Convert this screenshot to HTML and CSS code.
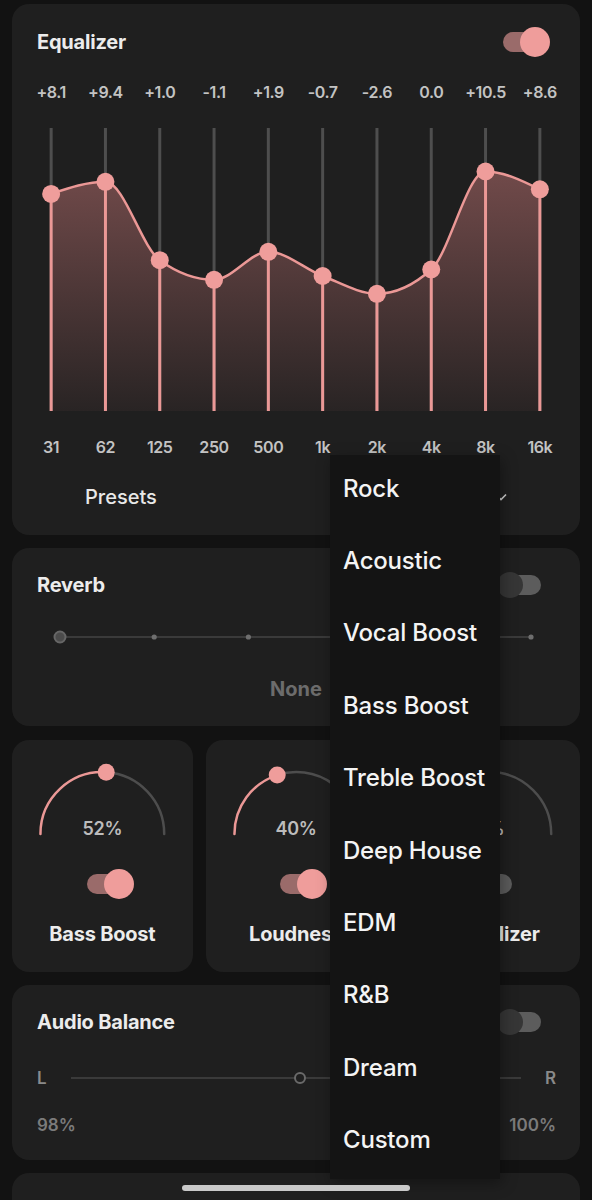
FILE: index.html
```html
<!DOCTYPE html>
<html lang="en">
<head>
<meta charset="utf-8">
<title>Sound Effects</title>
<link rel="stylesheet" href="styles.css">
</head>
<body>
<main class="screen">
  <section class="card eq">
    <header class="card-head">
      <h2 class="title">Equalizer</h2>
      <span class="toggle on"><span class="track"></span><span class="knob"></span></span>
    </header>
    <div class="bands values">
      <span>+8.1</span><span>+9.4</span><span>+1.0</span><span>-1.1</span><span>+1.9</span>
      <span>-0.7</span><span>-2.6</span><span>0.0</span><span>+10.5</span><span>+8.6</span>
    </div>
    <svg class="curve" width="543" height="312" viewBox="0 0 543 312">
      <defs>
        <linearGradient id="eqFill" gradientUnits="userSpaceOnUse" x1="0" y1="59" x2="0" y2="299">
          <stop offset="0" stop-color="#714a4a"/>
          <stop offset="1" stop-color="#292424"/>
        </linearGradient>
      </defs>
      <path fill="url(#eqFill)" d="M27.15,81.9 C45.25,75.85 63.35,69.8 81.45,69.8 C99.55,69.8 117.65,135.13 135.75,148.2 C153.85,161.27 171.95,167.8 190.05,167.8 C208.15,167.8 226.25,139.8 244.35,139.8 C262.45,139.8 280.55,157 298.65,164 C316.75,171 334.85,181.8 352.95,181.8 C371.05,181.8 389.15,173.7 407.25,157.5 C425.35,141.3 443.45,59.5 461.55,59.5 C479.65,59.5 497.75,68.4 515.85,77.3 L515.85,299 L27.15,299 Z"/>
      <g stroke="#4e4e4e" stroke-width="3">
        <line x1="27.15" y1="16" x2="27.15" y2="299"/>
        <line x1="81.45" y1="16" x2="81.45" y2="299"/>
        <line x1="135.75" y1="16" x2="135.75" y2="299"/>
        <line x1="190.05" y1="16" x2="190.05" y2="299"/>
        <line x1="244.35" y1="16" x2="244.35" y2="299"/>
        <line x1="298.65" y1="16" x2="298.65" y2="299"/>
        <line x1="352.95" y1="16" x2="352.95" y2="299"/>
        <line x1="407.25" y1="16" x2="407.25" y2="299"/>
        <line x1="461.55" y1="16" x2="461.55" y2="299"/>
        <line x1="515.85" y1="16" x2="515.85" y2="299"/>
      </g>
      <g stroke="#eb9896" stroke-width="3">
        <line x1="27.15" y1="81.9" x2="27.15" y2="299"/>
        <line x1="81.45" y1="69.8" x2="81.45" y2="299"/>
        <line x1="135.75" y1="148.2" x2="135.75" y2="299"/>
        <line x1="190.05" y1="167.8" x2="190.05" y2="299"/>
        <line x1="244.35" y1="139.8" x2="244.35" y2="299"/>
        <line x1="298.65" y1="164" x2="298.65" y2="299"/>
        <line x1="352.95" y1="181.8" x2="352.95" y2="299"/>
        <line x1="407.25" y1="157.5" x2="407.25" y2="299"/>
        <line x1="461.55" y1="59.5" x2="461.55" y2="299"/>
        <line x1="515.85" y1="77.3" x2="515.85" y2="299"/>
      </g>
      <path fill="none" stroke="#eb9896" stroke-width="2.5" d="M27.15,81.9 C45.25,75.85 63.35,69.8 81.45,69.8 C99.55,69.8 117.65,135.13 135.75,148.2 C153.85,161.27 171.95,167.8 190.05,167.8 C208.15,167.8 226.25,139.8 244.35,139.8 C262.45,139.8 280.55,157 298.65,164 C316.75,171 334.85,181.8 352.95,181.8 C371.05,181.8 389.15,173.7 407.25,157.5 C425.35,141.3 443.45,59.5 461.55,59.5 C479.65,59.5 497.75,68.4 515.85,77.3"/>
      <g fill="#ef9d9b">
        <circle cx="27.15" cy="81.9" r="9"/>
        <circle cx="81.45" cy="69.8" r="9"/>
        <circle cx="135.75" cy="148.2" r="9"/>
        <circle cx="190.05" cy="167.8" r="9"/>
        <circle cx="244.35" cy="139.8" r="9"/>
        <circle cx="298.65" cy="164" r="9"/>
        <circle cx="352.95" cy="181.8" r="9"/>
        <circle cx="407.25" cy="157.5" r="9"/>
        <circle cx="461.55" cy="59.5" r="9"/>
        <circle cx="515.85" cy="77.3" r="9"/>
      </g>
    </svg>
    <div class="bands freqs">
      <span>31</span><span>62</span><span>125</span><span>250</span><span>500</span>
      <span>1k</span><span>2k</span><span>4k</span><span>8k</span><span>16k</span>
    </div>
    <div class="presets">
      <span class="presets-label">Presets</span>
      <svg class="chevron" width="12" height="8" viewBox="0 0 12 8"><path d="M1 1.5 L6 6.5 L11 1.5" fill="none" stroke="#cfcfcf" stroke-width="1.6"/></svg>
    </div>
  </section>

  <section class="card reverb">
    <header class="card-head">
      <h2 class="title">Reverb</h2>
      <span class="toggle"><span class="track"></span><span class="knob"></span></span>
    </header>
    <svg class="steps" width="568" height="20" viewBox="0 0 568 20">
      <line x1="48" y1="10" x2="519" y2="10" stroke="#3a3a3a" stroke-width="2"/>
      <g fill="#6e6e6e">
        <circle cx="142.2" cy="10" r="2.6"/>
        <circle cx="236.4" cy="10" r="2.6"/>
        <circle cx="330.6" cy="10" r="2.6"/>
        <circle cx="424.8" cy="10" r="2.6"/>
        <circle cx="519" cy="10" r="2.6"/>
      </g>
      <circle cx="48" cy="10" r="5.5" fill="#4b4b4b" stroke="#666" stroke-width="2"/>
    </svg>
    <p class="reverb-value">None</p>
  </section>

  <div class="effects">
    <section class="card effect">
      <div class="gauge">
        <svg width="181" height="90" viewBox="0 0 181 90">
          <path d="M94.39,16.12 A62 62 0 0 1 152.5,78" fill="none" stroke="#4d4d4d" stroke-width="2.5" stroke-linecap="round"/>
          <path d="M28.5,78 A62 62 0 0 1 94.39,16.12" fill="none" stroke="#eb9896" stroke-width="2.5" stroke-linecap="round"/>
          <circle cx="94.39" cy="16.12" r="8.5" fill="#ef9d9b"/>
        </svg>
        <span class="gauge-value">52%</span>
      </div>
      <span class="toggle on"><span class="track"></span><span class="knob"></span></span>
      <h3 class="effect-name">Bass Boost</h3>
    </section>
    <section class="card effect">
      <div class="gauge">
        <svg width="181" height="90" viewBox="0 0 181 90">
          <path d="M71.34,19.03 A62 62 0 0 1 152.5,78" fill="none" stroke="#4d4d4d" stroke-width="2.5" stroke-linecap="round"/>
          <path d="M28.5,78 A62 62 0 0 1 71.34,19.03" fill="none" stroke="#eb9896" stroke-width="2.5" stroke-linecap="round"/>
          <circle cx="71.34" cy="19.03" r="8.5" fill="#ef9d9b"/>
        </svg>
        <span class="gauge-value">40%</span>
      </div>
      <span class="toggle on"><span class="track"></span><span class="knob"></span></span>
      <h3 class="effect-name">Loudness</h3>
    </section>
    <section class="card effect">
      <div class="gauge">
        <svg width="181" height="90" viewBox="0 0 181 90">
          <path d="M28.5,78 A62 62 0 0 1 152.5,78" fill="none" stroke="#4d4d4d" stroke-width="2.5" stroke-linecap="round"/>
          <circle cx="28.5" cy="78" r="8.5" fill="#5a5a5a"/>
        </svg>
        <span class="gauge-value">0%</span>
      </div>
      <span class="toggle"><span class="track"></span><span class="knob"></span></span>
      <h3 class="effect-name">Virtualizer</h3>
    </section>
  </div>

  <section class="card balance">
    <header class="card-head">
      <h2 class="title">Audio Balance</h2>
      <span class="toggle"><span class="track"></span><span class="knob"></span></span>
    </header>
    <div class="balance-row">
      <span class="side">L</span>
      <div class="balance-track"><span class="balance-knob"></span></div>
      <span class="side">R</span>
    </div>
    <div class="balance-values">
      <span>98%</span>
      <span>100%</span>
    </div>
  </section>

  <section class="card more"></section>
</main>

<ul class="menu">
  <li>Rock</li>
  <li>Acoustic</li>
  <li>Vocal Boost</li>
  <li>Bass Boost</li>
  <li>Treble Boost</li>
  <li>Deep House</li>
  <li>EDM</li>
  <li>R&amp;B</li>
  <li>Dream</li>
  <li>Custom</li>
</ul>

<div class="home-bar"></div>
</body>
</html>
```

FILE: styles.css
```css
* {
  box-sizing: border-box;
}

html,
body {
  margin: 0;
  background: #121212;
}

body {
  width: 592px;
  height: 1200px;
  overflow: hidden;
  position: relative;
  padding: 4px 12px 0;
  font-family: Inter, "Noto Sans", sans-serif;
  color: #eeeeee;
}

h2,
h3,
p {
  margin: 0;
}

.screen {
  display: flex;
  flex-direction: column;
  gap: 13px;
}

.card {
  background: #1f1f1f;
  border-radius: 17px;
}

/* header row with title and switch */
.card-head {
  display: flex;
  align-items: center;
  justify-content: space-between;
  height: 34px;
  margin-top: 20px;
  padding: 0 30px 0 25px;
}

.title {
  font-size: 20px;
  font-weight: 700;
  color: #ececec;
  letter-spacing: -0.2px;
}

/* switch */
.toggle {
  position: relative;
  display: block;
  width: 53px;
  height: 30px;
  flex: none;
}

.toggle .track {
  position: absolute;
  left: 6px;
  top: 5px;
  width: 38px;
  height: 20px;
  border-radius: 10px;
  background: #5c5c5c;
}

.toggle .knob {
  position: absolute;
  left: 0;
  top: 2px;
  width: 26px;
  height: 26px;
  border-radius: 50%;
  background: #363636;
}

.toggle.on .track {
  background: #9a6b6a;
}

.toggle.on .knob {
  left: 23px;
  top: 0;
  width: 30px;
  height: 30px;
  background: #ef9d9b;
}

/* equalizer */
.eq .card-head {
  margin-top: 21px;
}

.bands {
  display: grid;
  grid-template-columns: repeat(10, 1fr);
  padding: 0 13px 0 12px;
  height: 24px;
  line-height: 24px;
  text-align: center;
  font-size: 16px;
  font-weight: 600;
  color: #c3c3c3;
  letter-spacing: -0.4px;
}

.values {
  margin-top: 21px;
}

.curve {
  display: block;
  margin: 8px 0 0 12px;
}

.freqs {
  margin-top: 11px;
}

.presets {
  display: flex;
  align-items: center;
  height: 40px;
  margin-top: 18px;
  margin-bottom: 18px;
  padding: 0 73px 0 73px;
}

.presets-label {
  font-size: 20px;
  font-weight: 500;
  color: #e8e8e8;
}

.chevron {
  margin-left: auto;
}

/* reverb */
.steps {
  display: block;
  margin-top: 25px;
}

.reverb-value {
  margin: 30px 0 25px;
  line-height: 24px;
  text-align: center;
  font-size: 20px;
  font-weight: 700;
  color: #6c6c6c;
}

/* effect tiles */
.effects {
  display: grid;
  grid-template-columns: repeat(3, 1fr);
  gap: 13px;
  margin-top: 1px;
}

.effect {
  display: flex;
  flex-direction: column;
  align-items: center;
  padding: 16px 0 25px;
}

.gauge {
  display: grid;
  width: 100%;
  height: 90px;
}

.gauge > svg,
.gauge > .gauge-value {
  grid-area: 1 / 1;
}

.gauge > svg {
  display: block;
  width: 100%;
  height: 90px;
}

.gauge-value {
  align-self: end;
  justify-self: center;
  margin-bottom: 5px;
  line-height: 24px;
  font-size: 18px;
  font-weight: 600;
  color: #bcbcbc;
  letter-spacing: -0.3px;
}

.effect .toggle {
  margin: 23px 0 0 10px;
}

.effect-name {
  margin-top: 22px;
  line-height: 26px;
  font-size: 20px;
  font-weight: 700;
  color: #ececec;
  letter-spacing: -0.2px;
}

/* audio balance */
.balance-row {
  display: flex;
  align-items: center;
  height: 24px;
  margin-top: 27px;
  padding: 0 24px 0 25px;
}

.side {
  font-size: 17px;
  font-weight: 600;
  color: #8a8a8a;
}

.balance-track {
  position: relative;
  flex: 1;
  height: 2px;
  margin: 0 24px;
  background: #3a3a3a;
}

.balance-knob {
  position: absolute;
  left: 51%;
  top: -5px;
  width: 12px;
  height: 12px;
  margin-left: -6px;
  border-radius: 50%;
  border: 2px solid #6a6a6a;
  background: #1f1f1f;
}

.balance-values {
  display: flex;
  justify-content: space-between;
  height: 24px;
  line-height: 24px;
  margin: 23px 0 23px;
  padding: 0 24px 0 25px;
  font-size: 17px;
  font-weight: 600;
  color: #7b7b7b;
}

.more {
  height: 80px;
}

/* preset dropdown list */
.menu {
  position: absolute;
  left: 330px;
  top: 455px;
  width: 170px;
  margin: 0;
  padding: 0;
  list-style: none;
  background: #141414;
  box-shadow: 2px 4px 14px rgba(0, 0, 0, 0.35);
}

.menu li {
  display: flex;
  align-items: center;
  height: 72.4px;
  padding: 0 0 6px 13px;
  font-size: 24px;
  font-weight: 500;
  color: #f4f4f4;
  letter-spacing: -0.2px;
}

.home-bar {
  position: absolute;
  left: 182px;
  top: 1185px;
  width: 228px;
  height: 6px;
  border-radius: 3px;
  background: #c9c9c9;
}
```
